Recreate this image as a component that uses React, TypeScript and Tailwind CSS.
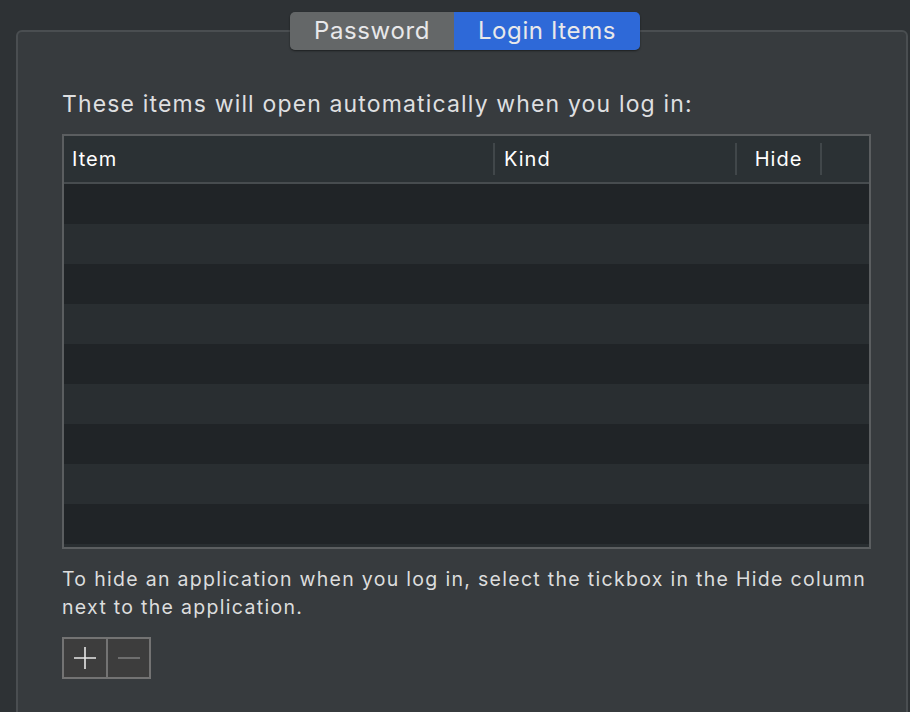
import React from 'react';

const font = { fontFamily: 'Inter, "Noto Sans", sans-serif' };

export default function App() {
  const rows = Array.from({ length: 10 });

  return (
    <div className="w-[910px] h-[712px] bg-[#2e3235] overflow-hidden pt-[30px] pl-[16px]" style={font}>
      <div className="relative w-[892px] h-[700px] bg-[#373b3e] border-2 border-[#4a4e51] rounded-[6px]">
        {/* segmented control */}
        <div className="absolute left-[272px] top-[-20px] flex h-[38px] rounded-[5px] overflow-hidden shadow-[0_1px_2px_rgba(0,0,0,0.5)] text-[24px] tracking-[0.6px] text-[#e8e8ea]">
          <div className="w-[164px] flex items-center justify-center bg-[#646768]">Password</div>
          <div className="w-[186px] flex items-center justify-center bg-[#2e69d8]">Login Items</div>
        </div>

        <div className="pl-[44px] pt-[58px]">
          <p className="text-[23px] leading-[28px] tracking-[1.15px] text-[#dedfe0]">
            These items will open automatically when you log in:
          </p>

          <div className="mt-[16px] w-[809px] h-[415px] border-2 border-[#5b5e60] overflow-hidden">
            <div className="flex h-[48px] bg-[#2b3134] border-b-2 border-[#474c4f] text-[20px] tracking-[1px] text-white items-center">
              <div className="w-[431px] pl-[8px] h-[32px] flex items-center border-r-2 border-[#41474a]">Item</div>
              <div className="w-[242px] pl-[9px] h-[32px] flex items-center border-r-2 border-[#41474a]">Kind</div>
              <div className="w-[85px] h-[32px] flex items-center justify-center border-r-2 border-[#41474a]">Hide</div>
            </div>
            {rows.map((_, i) => (
              <div
                key={i}
                className={`h-[40px] ${i % 2 === 0 ? 'bg-[#202427]' : 'bg-[#292e31]'}`}
              />
            ))}
          </div>

          <p className="mt-[16px] w-[810px] text-[19.5px] leading-[28px] tracking-[1.3px] text-[#dcdddd]">
            To hide an application when you log in, select the tickbox in the Hide column next to the application.
          </p>

          <div className="mt-[16px] flex w-[89px] h-[42px] border-2 border-[#737373] bg-[#3d3d3d]">
            <div className="w-[44px] flex items-center justify-center border-r-2 border-[#737373]">
              <svg width="24" height="24" viewBox="0 0 24 24">
                <path d="M12 1v22M1 12h22" stroke="#e6e6e6" strokeWidth="1.6" />
              </svg>
            </div>
            <div className="flex-1 flex items-center justify-center">
              <svg width="24" height="24" viewBox="0 0 24 24">
                <path d="M1 12h22" stroke="#6e6e6e" strokeWidth="2" />
              </svg>
            </div>
          </div>
        </div>
      </div>
    </div>
  );
}
